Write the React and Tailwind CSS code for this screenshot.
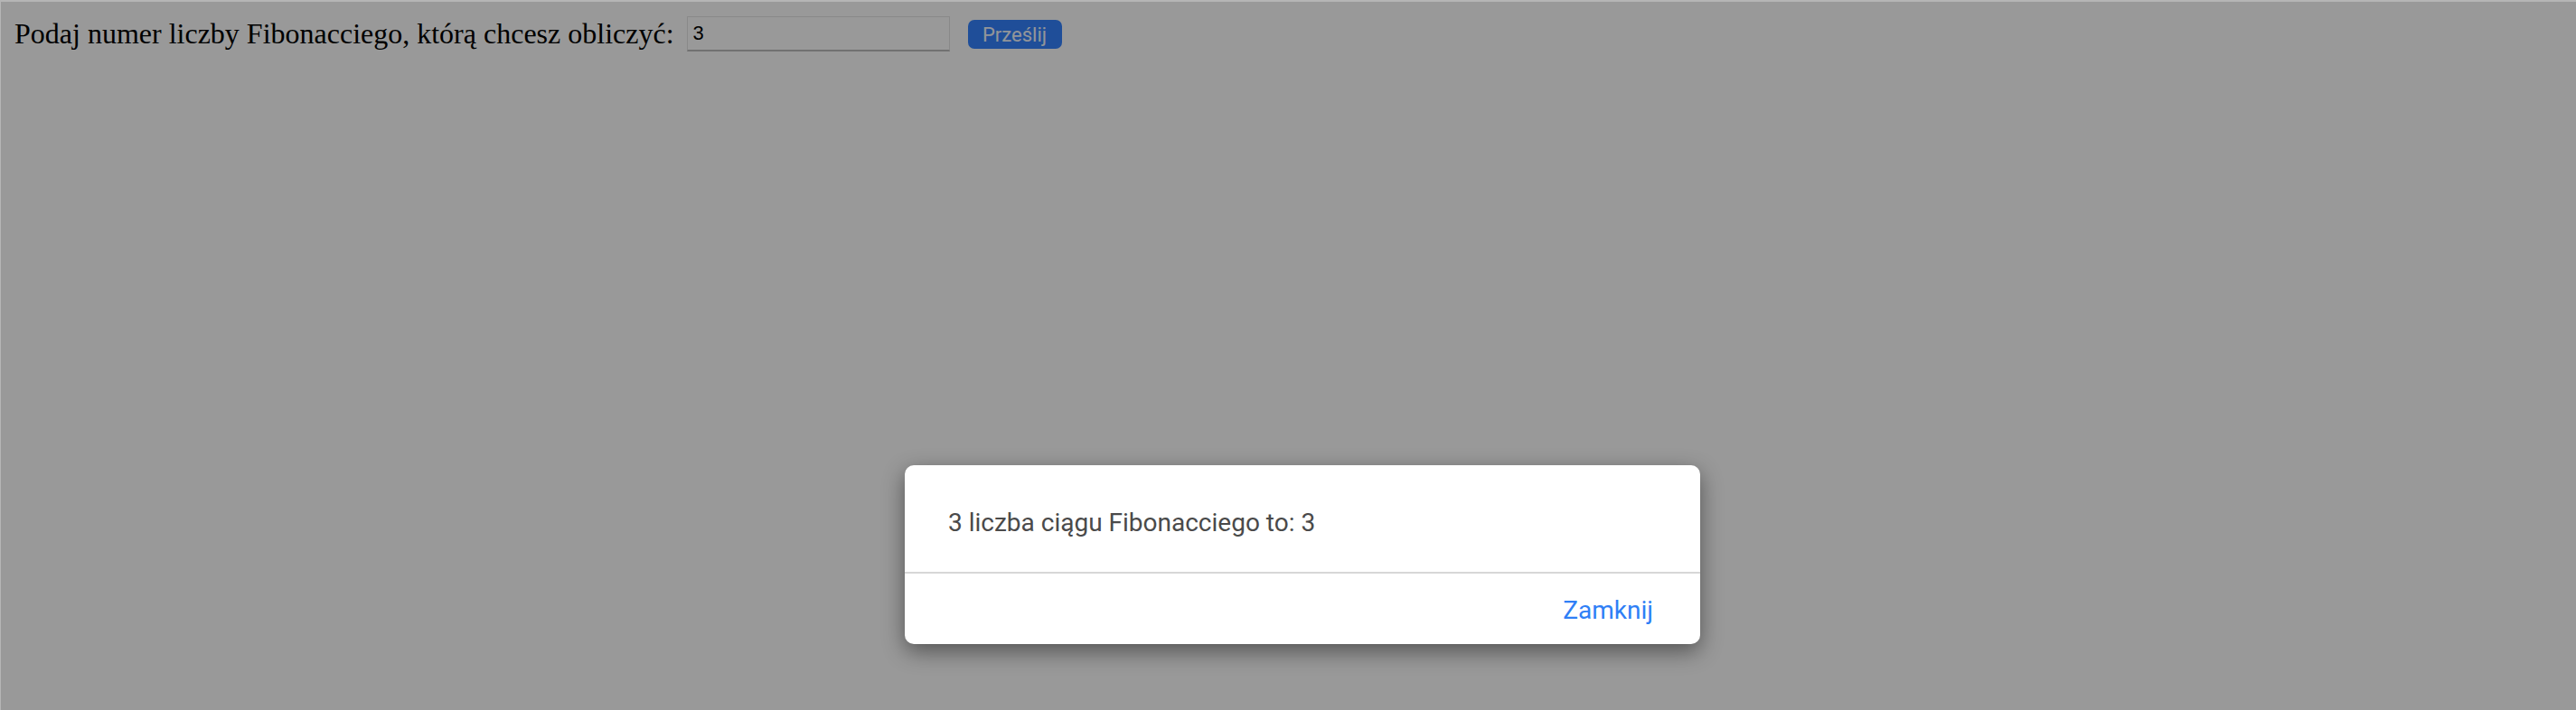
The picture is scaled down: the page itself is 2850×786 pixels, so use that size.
import React from 'react';

export default function App() {
  return (
    <div className="relative min-h-screen h-[786px] bg-white border-t-2 border-l border-[#b5b5b5] overflow-hidden">
      {/* Formularz */}
      <form className="flex items-center pt-4 pl-[15px]" onSubmit={(e) => e.preventDefault()}>
        <label
          htmlFor="n"
          className="text-[32px] leading-[37px] text-black"
          style={{ fontFamily: '"Liberation Serif", "Times New Roman", serif' }}
        >
          Podaj numer liczby Fibonacciego, którą chcesz obliczyć:
        </label>
        <input
          id="n"
          type="text"
          defaultValue="3"
          className="ml-[14px] w-[291px] h-[39px] px-[6px] bg-white border border-[#e4e4e4] border-b-2 border-b-[#bdbdbd] text-[22px] text-black outline-none"
          style={{ fontFamily: '"Liberation Sans", Arial, sans-serif' }}
        />
        <button
          type="submit"
          className="ml-5 w-[104px] h-8 rounded-[7px] bg-[#3483ff] text-[#f4f8ff] text-[22px]"
          style={{ fontFamily: 'Roboto, "Liberation Sans", sans-serif' }}
        >
          Prześlij
        </button>
      </form>

      {/* Nakładka + okno */}
      <div className="absolute inset-0 bg-black/40">
        <div
          className="absolute left-[1000px] top-[513px] w-[880px] bg-white rounded-[10px] shadow-[0_8px_24px_rgba(0,0,0,0.45)] overflow-hidden"
          style={{ fontFamily: 'Roboto, "Liberation Sans", sans-serif' }}
        >
          <div className="h-[118px] pl-12 pt-[47px] text-[28px] leading-[33px] text-[#4a4a4a]">
            3 liczba ciągu Fibonacciego to: 3
          </div>
          <div className="h-[2px] bg-[#d7d7d7]" />
          <div className="h-[78px] flex items-start justify-end pt-6 pr-[52px]">
            <button className="text-[28px] leading-[33px] text-[#2f7ff6]">Zamknij</button>
          </div>
        </div>
      </div>
    </div>
  );
}
